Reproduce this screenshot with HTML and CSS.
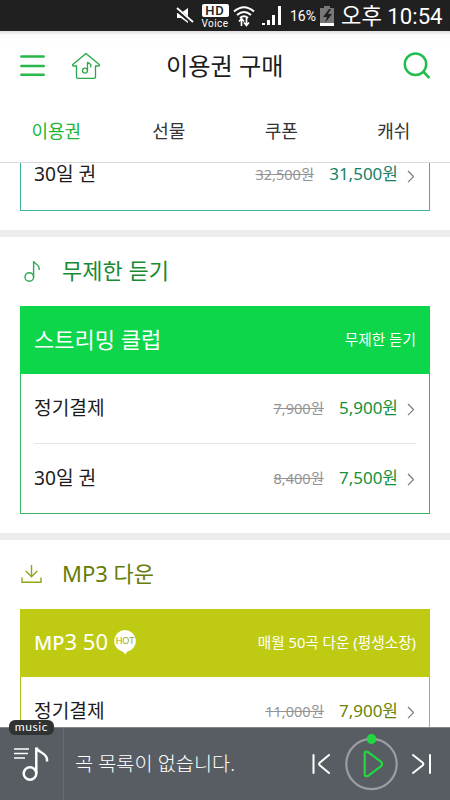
FILE: index.html
```
<!DOCTYPE html>
<html lang="ko">
<head>
<meta charset="utf-8">
<title>이용권 구매</title>
<link rel="stylesheet" href="styles.css">
</head>
<body>
<div class="status">
  <svg class="mute" width="20" height="18" viewBox="0 0 20 18"><path d="M2 6h4l7-5v15l-7-5H2z" fill="#fff"/><path d="M1 2l17 14" stroke="#202020" stroke-width="4"/><path d="M2 1l16 14" stroke="#fff" stroke-width="1.8"/></svg>
  <div class="hd"><b>HD</b><span>Voice</span></div>
  <svg class="wifi" width="22" height="22" viewBox="0 0 22 22" fill="none" stroke="#fff" stroke-width="2"><path d="M1 6.500Q11-2 21 6.500M4 10Q11 4 18 10M7 13Q11 9.500 15 13"/><path d="M8.500 21v-7M6 16.500l2.500-3 2.500 3M13.500 13v7M11 17.500l2.500 3 2.500-3" stroke-width="1.700"/></svg>
  <svg class="signal" width="22" height="21" viewBox="0 0 22 21" fill="#fff"><path d="M1 18h3v2H1zM6 15h3v5H6zM11 10h3v10h-3zM17 1h3v19h-3z"/></svg>
  <span class="pct">16%</span>
  <svg class="battery" width="14" height="20" viewBox="0 0 14 20"><path d="M4 0h6v2h4v18H0V2h4z" fill="#777"/><path d="M0 17h14v3H0z" fill="#fff"/><path d="M9 3L3 11h4l-2 6 7-9H8l3-5z" fill="#202020"/></svg>
  <span class="clock">오후 10:54</span>
</div>
<header class="top">
  <div class="titlebar">
    <svg class="menu" width="25" height="22" viewBox="0 0 25 22" stroke="#29b84b" stroke-width="2.500" stroke-linecap="round"><path d="M1.300 1.500h22.400M1.300 11h22.400M1.300 19.700h22.400"/></svg>
    <svg class="home" width="30" height="28" viewBox="0 0 30 28" fill="none" stroke="#29a84b" stroke-width="1.300" stroke-linejoin="round" stroke-linecap="round"><path d="M15 1.500L1.500 12.700q0 1.300 1 1.300H5.500v11q0 1.300 1.300 1.300h16.400q1.300 0 1.300-1.300V14h3q1 0 1-1.300z"/><circle cx="14" cy="18.600" r="2.500"/><path d="M16.500 18.500v-8.200l3.300 2.200v2.500"/></svg>
    <h1>이용권 구매</h1>
    <svg class="search" width="28" height="28" viewBox="0 0 28 28" fill="none" stroke="#22bd50" stroke-width="2.500"><circle cx="12.500" cy="12.200" r="10.700"/><path d="M20 19.500l6.500 6.500"/></svg>
  </div>
  <nav><span class="on">이용권</span><span>선물</span><span>쿠폰</span><span>캐쉬</span></nav>
</header>
<main>
  <section class="teal">
    <div class="card cut">
      <div class="row"><span class="name">30일 권</span><s>32,500원</s><span class="price">31,500원</span><svg class="chev" width="8" height="13" viewBox="0 0 8 13"><path d="M1 1l5 5q.8.600 0 1.200L1 12.200"/></svg></div>
    </div>
  </section>
  <section class="green">
    <h2><svg width="22" height="24" viewBox="0 0 22 24" fill="none" stroke="#2fa850" stroke-width="1.400"><circle cx="9.300" cy="18" r="4.300"/><path d="M13.600 18V2.200c1 2.800 5.500 3.400 5.500 7V11"/></svg>무제한 듣기</h2>
    <div class="card">
      <div class="head"><strong>스트리밍 클럽</strong><em>무제한 듣기</em></div>
      <div class="row"><span class="name">정기결제</span><s>7,900원</s><span class="price">5,900원</span><svg class="chev" width="8" height="13" viewBox="0 0 8 13"><path d="M1 1l5 5q.8.600 0 1.200L1 12.200"/></svg></div>
      <div class="row"><span class="name">30일 권</span><s>8,400원</s><span class="price">7,500원</span><svg class="chev" width="8" height="13" viewBox="0 0 8 13"><path d="M1 1l5 5q.8.600 0 1.200L1 12.200"/></svg></div>
    </div>
  </section>
  <section class="lime">
    <h2><svg width="22" height="24" viewBox="0 0 22 24" fill="none" stroke="#8da61c" stroke-width="1.400"><path d="M11.500 3v11.500M5.800 9l5.700 5.700L17.200 9M2 15.500v4.700h19v-4.700"/></svg>MP3 다운</h2>
    <div class="card">
      <div class="head"><strong><b>MP</b>3 50</strong><svg class="hot" width="24" height="26" viewBox="0 0 24 26"><path d="M12 1a11 11 0 0 1 2 21.800L12.500 25.500 10 22.800A11 11 0 0 1 12 1z" fill="#fff"/><text x="12" y="15.200" text-anchor="middle">HOT</text></svg><em>매월 50곡 다운 (평생소장)</em></div>
      <div class="row"><span class="name">정기결제</span><s>11,000원</s><span class="price">7,900원</span><svg class="chev" width="8" height="13" viewBox="0 0 8 13"><path d="M1 1l5 5q.8.600 0 1.200L1 12.200"/></svg></div>
    </div>
  </section>
</main>
<footer>
  <span class="badge">music</span>
  <div class="list"><svg width="36" height="38" viewBox="0 0 36 38" fill="none" stroke="#fff"><path d="M0 4h15M0 8.500h14M0 13h11" stroke-width="1.400"/><circle cx="16" cy="28.500" r="6.300" stroke-width="2.500"/><path d="M22.300 28.500V2.500c1 5 10.700 5 10.700 12v2" stroke-width="2.500"/></svg></div>
  <p>곡 목록이 없습니다.</p>
  <svg class="controls" width="122" height="60" viewBox="0 0 122 60" fill="none" stroke="#fff" stroke-width="2" stroke-linecap="round" stroke-linejoin="round"><path d="M2.500 21v18M18 21L9 28.500q-1.800 1.500 0 3l9 7.500M119 21v18M102 21l9.500 7.500q1.800 1.500 0 3L102 39"/><circle cx="60.500" cy="30" r="25.200" stroke="#9a9ea2" stroke-width="2.200"/><circle cx="60.500" cy="5" r="4.900" fill="#22d63f" stroke="none"/><path d="M53.700 19.500q0-2.500 2.500-1.700l1.600.800 12 9q2.500 2.400 0 4.800l-12 9q-4.100 2.200-4.100-1.500z" stroke="#22d63f" stroke-width="2.300"/></svg>
</footer>
</body>
</html>
```

FILE: styles.css
```
* { box-sizing: border-box; }
body {
  margin: 0;
  width: 450px;
  height: 800px;
  overflow: hidden;
  display: flex;
  flex-direction: column;
  background: #fff;
  color: #1c1c1c;
  font-family: "Noto Sans", "Noto Sans CJK KR", sans-serif;
}
svg { flex: none; display: block; }
h1, h2, p { margin: 0; font-weight: 400; }

.status {
  height: 31px;
  flex: none;
  display: flex;
  align-items: center;
  padding-left: 175px;
  background: #202020;
  color: #fff;
  font-family: Roboto, "Noto Sans CJK KR", sans-serif;
  white-space: nowrap;
}
.hd { width: 28px; margin: 1px 0 0 6px; display: flex; flex-direction: column; align-items: center; gap: 1px; }
.hd b { width: 27px; height: 13px; border-radius: 2px; background: #fff; color: #202020; font-size: 13px; line-height: 13px; font-weight: 500; text-align: center; letter-spacing: 1px; }
.hd span { font-size: 10px; line-height: 11px; letter-spacing: .4px; }
.wifi { margin-left: 4px; }
.signal { margin-left: 6px; }
.pct { margin-left: 7px; width: 27px; font-size: 14px; }
.battery { margin-left: 3px; }
.clock { margin-left: 7px; font-size: 22.200px; line-height: 30px; }

.top {
  height: 132px;
  flex: none;
  border-bottom: 1px solid #d8d8d8;
  background: linear-gradient(#dedede, #fbfbfb 4px, #fff 12px);
}
.titlebar { height: 70px; display: flex; align-items: center; padding: 0 19px 0 20px; }
.home { margin-left: 26px; }
.titlebar h1 { margin-left: 65px; font-size: 24.200px; line-height: 34px; }
.search { margin-left: auto; }
nav { display: grid; grid-template-columns: repeat(4, 1fr); padding-top: 16px; font-size: 18px; line-height: 28px; text-align: center; color: #333; }
nav .on { color: #1cb637; }

main { flex: 1; min-height: 0; overflow: hidden; }
section { --line: #3db49d; --price: #168068; --fill: #3db49d; }
.green { --line: #3ab45f; --price: #15913a; --fill: #0dd64a; --title: #188a34; }
.lime { --line: #a6bd1e; --price: #688308; --fill: #bfcb13; --title: #667d0a; }
section { padding: 0 20px 19px; border-bottom: 7px solid #ededed; }
h2 { height: 69px; padding-bottom: 4px; display: flex; align-items: center; gap: 20px; font-size: 22px; line-height: 32px; color: var(--title); }
h2 svg { margin-top: 3px; }
.card { border: 1.500px solid var(--line); border-top: 0; }
.card.cut { height: 48px; }
.head { height: 68px; margin: 0 -1px; padding: 0 14px 3px; display: flex; align-items: center; background: var(--fill); color: #fff; }
.head strong { font-size: 22px; line-height: 30px; font-weight: 400; }
.head strong b { font-weight: 500; font-size: 20px; }
.head em { margin-left: auto; font-style: normal; font-size: 14.650px; }
.hot { margin-left: 5px; }
.hot text { font: 8.800px Lato, sans-serif; fill: #9dab10; }
.row { height: 69px; padding-bottom: 2px; margin: 0 13px; display: flex; align-items: center; font-size: 19.200px; line-height: 28px; }
.row + .row { border-top: 1px solid #e6e6e6; height: 70px; }
.cut .row { height: 22px; padding-bottom: 0; }
.name { margin-right: auto; }
.row s { margin-right: 15px; font-size: 14.500px; color: #949494; }
.price { font-size: 17px; color: var(--price); }
.chev { margin: 4px 1px 0 9px; fill: none; stroke: #777; stroke-width: 1.200; }

footer { position: relative; height: 73px; flex: none; display: flex; align-items: center; background: #575d62; border-top: 1px solid #81868a; color: #fff; }
.badge { position: absolute; left: 9px; top: -8px; width: 45px; height: 15px; border-radius: 6px; background: #303234; font: 12px/14px Lato, sans-serif; letter-spacing: .6px; text-align: center; }
.list { width: 64px; height: 72px; padding: 17px 0 0 14px; border-right: 1px solid #656b70; }
footer p { margin-left: 11px; font-size: 19.700px; line-height: 30px; font-weight: 300; }
.controls { margin-left: auto; margin-right: 17.500px; }
```
